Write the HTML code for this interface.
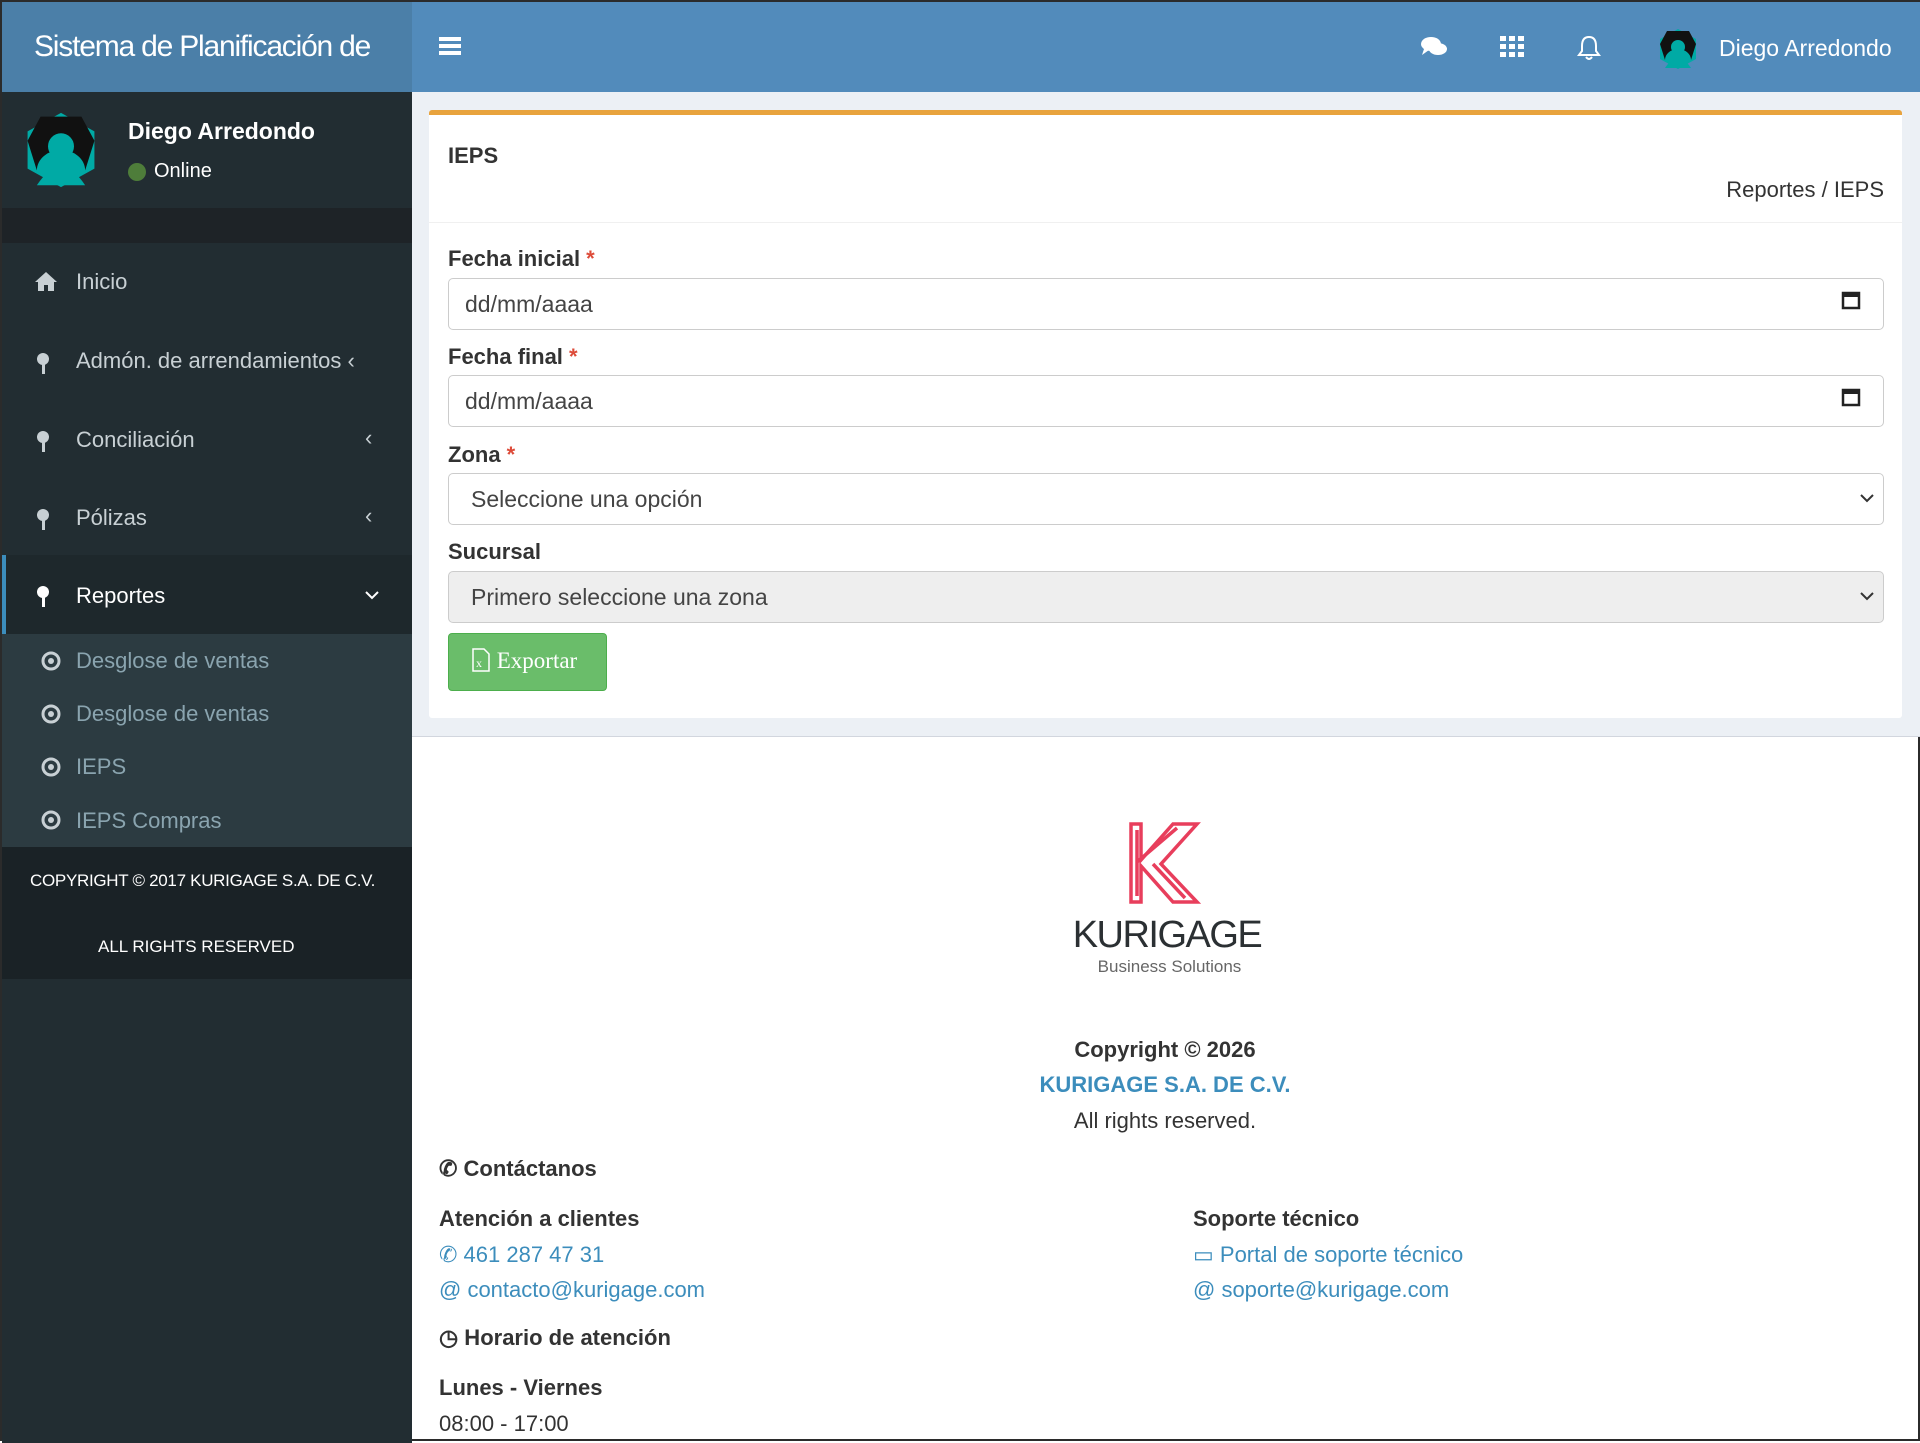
<!DOCTYPE html>
<html><head><meta charset="utf-8"><style>
*{box-sizing:border-box;margin:0;padding:0}
body{width:1920px;height:1441px;overflow:hidden;font-family:"Liberation Sans",sans-serif;background:#fff;position:relative;border:2px solid #2b2b2b}
.abs{position:absolute}
.hdl{left:0;top:0;width:410px;height:90px;background:#4b7fa8;color:#fff;font-size:30px;letter-spacing:-1.2px;padding:28px 0 0 32px}
.hdr{left:410px;top:0;width:1510px;height:90px;background:#528bbb;color:#fff}
.side{left:0;top:90px;width:410px;height:1351px;background:#222d32}
.menu{color:#c8d0d4;font-size:22px}
.sub{color:#8aa4af;font-size:22px}
.content{left:410px;top:90px;width:1510px;height:645px;background:#ecf0f5;border-bottom:1px solid #d2d6de}
.box{left:427px;top:108px;width:1473px;height:608px;background:#fff;border-top:5px solid #e8a33d;border-radius:3px}
.lbl{font-weight:bold;font-size:22px;color:#333}
.lbl b{color:#dd4b39}
.inp{left:446px;width:1436px;height:52px;border:1px solid #ccc;border-radius:5px;font-size:23px;color:#444;padding:12px 16px;background:#fff}
.ft{font-size:22px;color:#333}
a{color:#3c8dbc;text-decoration:none}
.bold{font-weight:bold}
</style></head><body>
<div class="abs hdl">Sistema de Planificación de</div>
<div class="abs hdr">
 <div class="abs" style="left:27px;top:35px;width:22px;height:4px;background:#fff;box-shadow:0 7px 0 #fff,0 14px 0 #fff"></div>
 <svg class="abs" style="left:1008px;top:34px" width="28" height="22" viewBox="0 0 28 22"><ellipse cx="11" cy="8" rx="10" ry="7" fill="#fff"/><ellipse cx="18" cy="13" rx="9" ry="6" fill="#fff"/><path d="M4 13 L2 19 L9 14Z" fill="#fff"/></svg>
 <svg class="abs" style="left:1088px;top:34px" width="24" height="22" viewBox="0 0 24 22"><g fill="#fff"><rect x="0" y="0" width="6" height="5"/><rect x="9" y="0" width="6" height="5"/><rect x="18" y="0" width="6" height="5"/><rect x="0" y="8" width="6" height="5"/><rect x="9" y="8" width="6" height="5"/><rect x="18" y="8" width="6" height="5"/><rect x="0" y="16" width="6" height="5"/><rect x="9" y="16" width="6" height="5"/><rect x="18" y="16" width="6" height="5"/></g></svg>
 <svg class="abs" style="left:1165px;top:33px" width="24" height="26" viewBox="0 0 24 26"><path d="M12 2 C6 2 5 7 5 11 L5 16 L2 20 L22 20 L19 16 L19 11 C19 7 18 2 12 2Z M9 22 Q12 26 15 22" fill="none" stroke="#fff" stroke-width="2"/></svg>
 <svg class="abs" style="left:1245px;top:26px" width="42" height="42" viewBox="0 0 42 42"><polygon points="21,1 39,11 39,31 21,41 3,31 3,11" fill="#00aaa5"/><path d="M10 3 L32 3 L39 16 L34 32 A13 11 0 0 0 8 32 L3 16Z" fill="#111"/><circle cx="21" cy="19" r="7" fill="#00aaa5"/><path d="M8 40 Q21 20 34 40Z" fill="#00aaa5"/></svg>
 <div class="abs" style="left:1307px;top:33px;font-size:23px">Diego Arredondo</div>
</div>
<div class="abs side">
 <svg class="abs" style="left:20px;top:18px" width="78" height="80" viewBox="0 0 42 42"><polygon points="21,1 39,11 39,31 21,41 3,31 3,11" fill="#00aaa5"/><path d="M10 3 L32 3 L39 16 L34 32 A13 11 0 0 0 8 32 L3 16Z" fill="#111"/><circle cx="21" cy="19" r="7" fill="#00aaa5"/><path d="M8 40 Q21 20 34 40Z" fill="#00aaa5"/></svg>
 <div class="abs" style="left:126px;top:26px;color:#fff;font-weight:bold;font-size:23px">Diego Arredondo</div>
 <div class="abs" style="left:126px;top:71px;width:18px;height:18px;border-radius:50%;background:#4e7d3a"></div>
 <div class="abs" style="left:152px;top:68px;color:#fff;font-size:20px">Online</div>
 <div class="abs" style="left:0;top:116px;width:410px;height:35px;background:#1e2327"></div>
 <svg class="abs" style="left:32px;top:178px" width="24" height="22" viewBox="0 0 24 22"><path d="M12 2 L1 12 L4 12 L4 21 L10 21 L10 15 L14 15 L14 21 L20 21 L20 12 L23 12Z" fill="#c8d0d4"/></svg>
 <div class="abs menu" style="left:74px;top:177px">Inicio</div>
 <div class="abs menu" style="left:74px;top:256px">Admón. de arrendamientos ‹</div>
 <div class="abs menu" style="left:74px;top:335px">Conciliación</div><div class="abs menu" style="left:363px;top:333px">‹</div>
 <div class="abs menu" style="left:74px;top:413px">Pólizas</div><div class="abs menu" style="left:363px;top:411px">‹</div>
 <div class="abs" style="left:0;top:463px;width:410px;height:79px;background:#1e282c;border-left:4px solid #3c8dbc"></div>
 <div class="abs" style="left:74px;top:491px;color:#fff;font-size:22px">Reportes</div>
 <svg class="abs" style="left:362px;top:498px" width="16" height="10"><path d="M2 2 L8 8 L14 2" fill="none" stroke="#fff" stroke-width="2"/></svg>
 <div class="abs" style="left:0;top:542px;width:410px;height:213px;background:#2c3b41"></div>
 <div class="abs sub" style="left:74px;top:556px">Desglose de ventas</div>
 <div class="abs sub" style="left:74px;top:609px">Desglose de ventas</div>
 <div class="abs sub" style="left:74px;top:662px">IEPS</div>
 <div class="abs sub" style="left:74px;top:716px">IEPS Compras</div>
 <div class="abs" style="left:0;top:755px;width:410px;height:132px;background:#1a2226;color:#fff;font-size:17px">
  <div class="abs" style="left:28px;top:24px;letter-spacing:-0.3px">COPYRIGHT © 2017 KURIGAGE S.A. DE C.V.</div>
  <div class="abs" style="left:96px;top:90px">ALL RIGHTS RESERVED</div>
 </div>
</div>
<svg class="abs" style="left:0;top:0" width="410" height="900">
 <g fill="#c8d0d4"><circle cx="41" cy="357" r="6"/><rect x="40" y="360" width="3" height="12"/><circle cx="41" cy="435" r="6"/><rect x="40" y="438" width="3" height="12"/><circle cx="41" cy="513" r="6"/><rect x="40" y="516" width="3" height="12"/></g>
 <g fill="#fff"><circle cx="41" cy="590" r="6"/><rect x="40" y="593" width="3" height="12"/></g>
 <g fill="none" stroke="#c8d0d4" stroke-width="3"><circle cx="49" cy="659" r="8"/><circle cx="49" cy="712" r="8"/><circle cx="49" cy="765" r="8"/><circle cx="49" cy="818" r="8"/></g>
 <g fill="#c8d0d4"><circle cx="49" cy="659" r="3"/><circle cx="49" cy="712" r="3"/><circle cx="49" cy="765" r="3"/><circle cx="49" cy="818" r="3"/></g>
</svg>
<div class="abs content"></div>
<div class="abs box">
 <div class="abs" style="left:19px;top:28px;font-weight:bold;font-size:22px;color:#333">IEPS</div>
 <div class="abs" style="right:18px;top:62px;font-size:22px;color:#333">Reportes / IEPS</div>
 <div class="abs" style="left:0;top:107px;width:100%;height:1px;background:#f0f0f0"></div>
</div>
<div class="abs lbl" style="left:446px;top:244px">Fecha inicial <b>*</b></div>
<div class="abs inp" style="top:276px">dd/mm/aaaa</div>
<div class="abs lbl" style="left:446px;top:342px">Fecha final <b>*</b></div>
<div class="abs inp" style="top:373px">dd/mm/aaaa</div>
<div class="abs lbl" style="left:446px;top:440px">Zona <b>*</b></div>
<div class="abs inp" style="top:471px;padding-left:22px">Seleccione una opción</div>
<div class="abs lbl" style="left:446px;top:537px">Sucursal</div>
<div class="abs inp" style="top:569px;padding-left:22px;background:#eee">Primero seleccione una zona</div>
<svg class="abs" style="left:1838px;top:288px" width="40" height="320">
 <g fill="none" stroke="#222" stroke-width="2.5"><rect x="3" y="3" width="16" height="15"/><rect x="3" y="100" width="16" height="15"/></g>
 <rect x="3" y="3" width="16" height="4" fill="#222"/><rect x="3" y="100" width="16" height="4" fill="#222"/>
 <path d="M21 205 L27 211 L33 205 M21 303 L27 309 L33 303" fill="none" stroke="#333" stroke-width="2"/>
</svg>
<div class="abs" style="left:446px;top:631px;width:159px;height:58px;background:#6abd6a;border:1px solid #4cae4c;border-radius:4px;color:#fff;font-family:'Liberation Serif',serif;font-size:23px;padding:14px 0 0 22px">
 <svg style="vertical-align:-4px" width="20" height="24" viewBox="0 0 20 24"><path d="M2 1 H13 L18 6 V23 H2Z" fill="none" stroke="#fff" stroke-width="1.5"/><text x="5" y="19" fill="#fff" font-size="12" font-family="Liberation Serif">x</text></svg> Exportar</div>
<svg class="abs" style="left:1127px;top:820px" width="72" height="82" viewBox="0 0 72 82">
 <g fill="none" stroke="#e83e5c" stroke-width="3.5"><path d="M2 2 H12 V38 L44 2 H68 L32 42 L68 80 H44 L12 44 V80 H2Z"/><path d="M8 8 V74 M8 40 L48 6 M24 42 L56 76"/></g>
</svg>
<div class="abs" style="left:1000px;top:912px;width:330px;text-align:center;font-size:38px;color:#2b3033;letter-spacing:-1.5px">KURIGAGE</div>
<div class="abs" style="left:1000px;top:955px;width:335px;text-align:center;font-size:17px;color:#666">Business Solutions</div>
<div class="abs ft bold" style="left:900px;top:1035px;width:526px;text-align:center">Copyright © 2026</div>
<div class="abs ft bold" style="left:900px;top:1070px;width:526px;text-align:center"><a href="#">KURIGAGE S.A. DE C.V.</a></div>
<div class="abs ft" style="left:900px;top:1106px;width:526px;text-align:center">All rights reserved.</div>
<div class="abs ft bold" style="left:437px;top:1154px">✆ Contáctanos</div>
<div class="abs ft bold" style="left:437px;top:1204px">Atención a clientes</div>
<div class="abs ft" style="left:437px;top:1240px"><a href="#">✆ 461 287 47 31</a></div>
<div class="abs ft" style="left:437px;top:1275px"><a href="#">@ contacto@kurigage.com</a></div>
<div class="abs ft bold" style="left:437px;top:1323px">◷ Horario de atención</div>
<div class="abs ft bold" style="left:437px;top:1373px">Lunes - Viernes</div>
<div class="abs ft" style="left:437px;top:1409px">08:00 - 17:00</div>
<div class="abs ft bold" style="left:1191px;top:1204px">Soporte técnico</div>
<div class="abs ft" style="left:1191px;top:1240px"><a href="#">▭ Portal de soporte técnico</a></div>
<div class="abs ft" style="left:1191px;top:1275px"><a href="#">@ soporte@kurigage.com</a></div>
</body></html>
